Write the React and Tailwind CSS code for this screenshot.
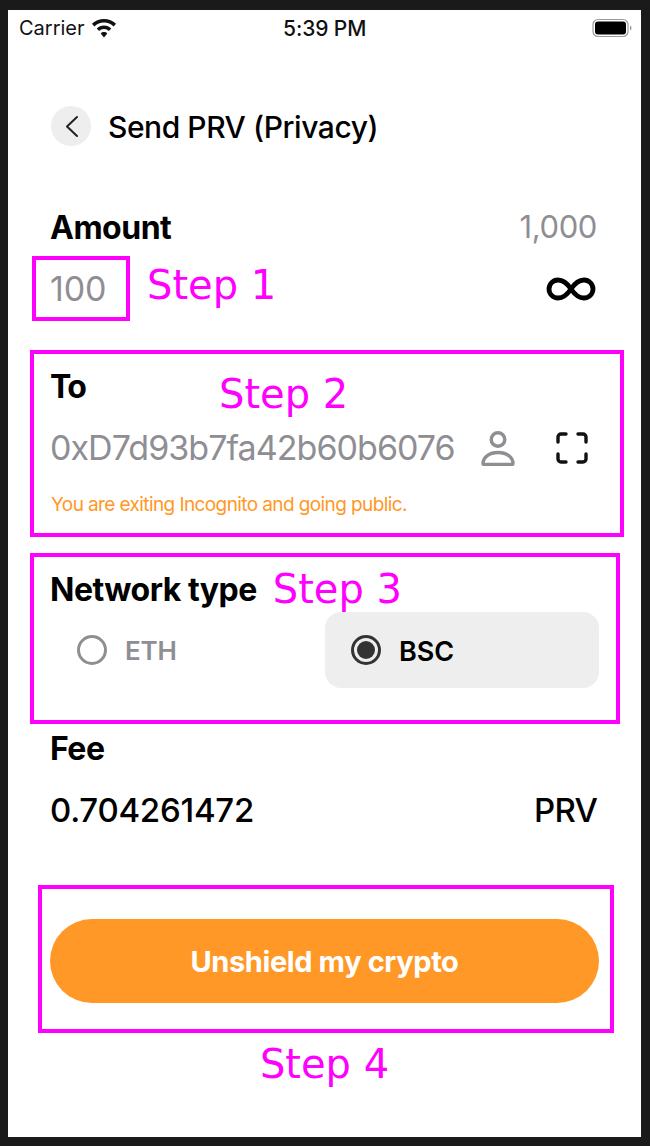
const STEP = "font-['DejaVu_Sans',sans-serif] text-[40px] leading-[44px] text-[#ff00ff] whitespace-nowrap"
const LABEL = 'text-[32px] leading-[36px] font-bold tracking-[-0.5px] text-black'

function Wifi() {
  return (
    <svg width="26" height="19" viewBox="0 0 24 18" fill="#111">
      <path d="M12 0C7.6 0 3.6 1.7.6 4.6l2.3 2.4C5.3 4.7 8.5 3.3 12 3.3s6.7 1.4 9.1 3.7l2.3-2.4C20.4 1.700 16.400 0 12 0z" />
      <path d="M12 6.200c-2.700 0-5.100 1-6.900 2.800l2.300 2.400c1.200-1.200 2.800-1.900 4.600-1.900s3.400.7 4.600 1.900L18.900 9c-1.800-1.800-4.200-2.800-6.900-2.800z" />
      <path d="M12 12.400c-1.200 0-2.300.5-3.100 1.300L12 17.600l3.100-3.900c-.8-.8-1.900-1.300-3.100-1.300z" />
    </svg>
  )
}

function Battery() {
  return (
    <svg width="40" height="20" viewBox="0 0 40 20">
      <rect x="1" y="1.500" width="35" height="17" rx="5" fill="none" stroke="#9a9a9a" strokeWidth="1.200" />
      <rect x="3" y="3.500" width="31" height="13" rx="3" fill="#000" />
      <path d="M38 7.500c1 .4 1.500 1.400 1.500 2.500s-.5 2.100-1.500 2.500z" fill="#9a9a9a" />
    </svg>
  )
}

function Chevron() {
  return (
    <svg width="15" height="23" viewBox="0 0 15 23" fill="none" stroke="#222" strokeWidth="2" strokeLinecap="round" strokeLinejoin="round">
      <path d="M13 2 3 11.500 13 21" />
    </svg>
  )
}

function Infinity() {
  return (
    <svg width="50" height="24" viewBox="0 0 50 24" fill="none" stroke="#000" strokeWidth="4.800">
      <path d="M25 12C21 6 17 3 12 3a9 9 0 0 0 0 18c5 0 9-3 13-9s8-9 13-9a9 9 0 0 1 0 18c-5 0-9-3-13-9z" />
    </svg>
  )
}

function Person() {
  return (
    <svg width="34" height="36" viewBox="0 0 34 36" fill="none" stroke="#8e8e93" strokeWidth="3.400">
      <circle cx="17" cy="9.500" r="6.800" />
      <path d="M2 33.500c0-6.500 6.500-11 15-11s15 4.500 15 11c0 .5-.4 1-1 1H3c-.6 0-1-.5-1-1z" strokeLinejoin="round" />
    </svg>
  )
}

function Scan() {
  return (
    <svg width="32" height="32" viewBox="0 0 32 32" fill="none" stroke="#111" strokeWidth="3.400" strokeLinecap="round">
      <path d="M2 10V5a3 3 0 0 1 3-3h5M22 2h5a3 3 0 0 1 3 3v5M30 22v5a3 3 0 0 1-3 3h-5M10 30H5a3 3 0 0 1-3-3v-5" />
    </svg>
  )
}

export default function App() {
  return (
    <div className="w-[650px] h-[1146px] bg-[#1a1a1a] pt-[10px] pl-[8px] font-['Inter',sans-serif]">
      <div className="w-[633px] h-[1127px] bg-white overflow-hidden">

        {/* status bar */}
        <div className="h-[36px] flex items-center justify-between pl-[11px] pr-[9px] relative text-[#111]">
          <div className="flex items-center gap-[6px]">
            <span className="text-[20px] leading-none">Carrier</span>
            <Wifi />
          </div>
          <span className="absolute left-[275px] text-[21px] leading-none font-medium tracking-[-0.1px]">5:39 PM</span>
          <Battery />
        </div>

        {/* header */}
        <div className="mt-[60px] ml-[43px] h-[40px] flex items-center">
          <div className="w-[40px] h-[40px] rounded-full bg-[#eeeeee] flex items-center justify-center">
            <Chevron />
          </div>
          <h1 className="ml-[17px] pt-[2px] text-[30px] leading-none font-medium tracking-[-0.45px] text-black whitespace-nowrap">Send PRV (Privacy)</h1>
        </div>

        {/* amount */}
        <div className="mt-[64px] ml-[42px] mr-[44px] h-[35px] flex items-center justify-between">
          <span className={LABEL}>Amount</span>
          <span className="text-[31px] leading-none tracking-[-0.4px] text-[#8e8e93] -mt-[2px]">1,000</span>
        </div>
        <div className="mt-[11px] ml-[24px] mr-[45px] h-[65px] flex items-center">
          <div className="w-[98px] h-[65px] border-[4px] border-[#ff00ff] pl-[14px] flex items-center">
            <span className="text-[34px] leading-none tracking-[-0.2px] text-[#8e8e93]">100</span>
          </div>
          <span className={`ml-[17px] -mt-[7px] ${STEP}`}>Step 1</span>
          <div className="ml-auto"><Infinity /></div>
        </div>

        {/* to */}
        <div className="mt-[29px] ml-[22px] w-[594px] h-[187px] border-[4px] border-[#ff00ff] pl-[16px] relative">
          <div className={`${LABEL} mt-[15px] tracking-[-1.5px]`}>To</div>
          <span className={`absolute left-[185px] top-[18px] ${STEP}`}>Step 2</span>
          <div className="mt-[23px] flex items-center h-[40px]">
            <span className="text-[34px] leading-none tracking-[-0.95px] text-[#8e8e93] whitespace-nowrap">0xD7d93b7fa42b60b6076</span>
            <div className="ml-[26px]"><Person /></div>
            <div className="ml-[41px]"><Scan /></div>
          </div>
          <p className="mt-[27px] ml-[1px] text-[19px] leading-none tracking-[-0.6px] text-[#ff9826]">You are exiting Incognito and going public.</p>
        </div>

        {/* network */}
        <div className="mt-[16px] ml-[22px] w-[590px] h-[171px] border-[4px] border-[#ff00ff] pl-[16px]">
          <div className="flex items-center mt-[13px] h-[40px]">
            <span className={LABEL}>Network type</span>
            <span className={`ml-[16px] -mt-[2px] ${STEP}`}>Step 3</span>
          </div>
          <div className="mt-[2px] flex">
            <div className="w-[275px] h-[76px] flex items-center pl-[27px]">
              <div className="w-[30px] h-[30px] rounded-full border-[3px] border-[#8e8e93]" />
              <span className="ml-[18px] pt-[2px] text-[26px] leading-none font-semibold tracking-[-0.2px] text-[#8e8e93]">ETH</span>
            </div>
            <div className="w-[274px] h-[76px] rounded-[16px] bg-[#eeeeee] flex items-center pl-[26px]">
              <div className="w-[30px] h-[30px] rounded-full border-[3px] border-[#333333] flex items-center justify-center">
                <div className="w-[18px] h-[18px] rounded-full bg-[#333333]" />
              </div>
              <span className="ml-[18px] pt-[2px] text-[27px] leading-none font-semibold text-black">BSC</span>
            </div>
          </div>
        </div>

        {/* fee */}
        <div className={`mt-[7px] ml-[42px] ${LABEL}`}>Fee</div>
        <div className="mt-[23px] ml-[42px] mr-[44px] flex items-center justify-between text-[33px] leading-[40px] font-medium tracking-[-0.25px] text-black">
          <span>0.704261472</span>
          <span className="tracking-[-0.8px]">PRV</span>
        </div>

        {/* button */}
        <div className="mt-[55px] ml-[30px] w-[576px] h-[148px] border-[4px] border-[#ff00ff] pl-[8px] pt-[30px]">
          <button className="w-[549px] h-[84px] rounded-full bg-[#ff9826] text-white text-[29px] font-bold tracking-[-0.4px] pt-[2px]">
            Unshield my crypto
          </button>
        </div>
        <div className={`mt-[9px] text-center ${STEP}`}>Step 4</div>
      </div>
    </div>
  )
}
